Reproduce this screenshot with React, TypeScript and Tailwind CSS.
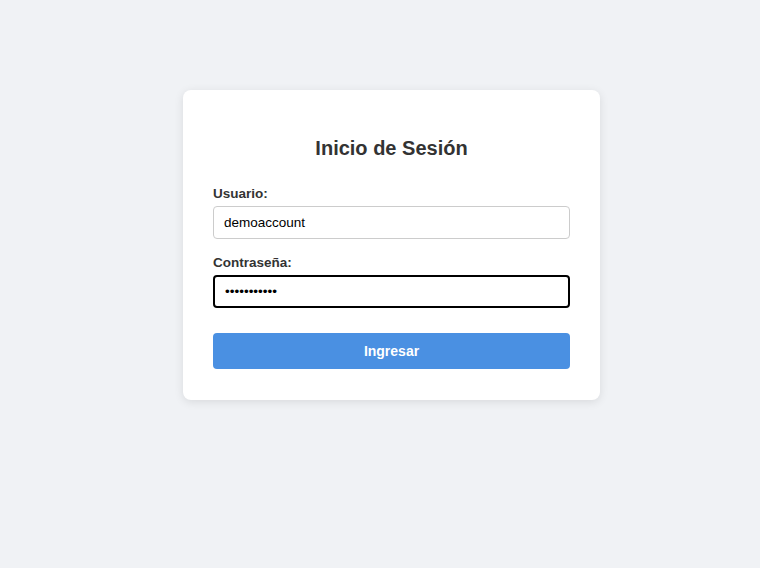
export default function App() {
  return (
    <div
      className="min-h-[568px] w-full bg-[#f0f2f5] pt-[90px] pl-[183px]"
      style={{ fontFamily: '"Liberation Sans", Arial, sans-serif' }}
    >
      <div className="w-[417px] rounded-lg bg-white px-[30px] pt-[47px] pb-[31px] shadow-[0_2px_10px_rgba(0,0,0,0.1)]">
        <h2 className="text-center text-[20px] font-bold leading-[23px] text-[#333]">
          Inicio de Sesión
        </h2>

        <form className="mt-[26px]" onSubmit={(e) => e.preventDefault()}>
          <label className="block text-[13.5px] font-bold leading-[15px] text-[#333]">
            Usuario:
          </label>
          <input
            type="text"
            defaultValue="demoaccount"
            className="mt-[5px] block h-[33px] w-full rounded border border-[#ccc] px-[10px] text-[13.5px] text-black outline-none"
          />

          <label className="mt-[16px] block text-[13.5px] font-bold leading-[15px] text-[#333]">
            Contraseña:
          </label>
          <input
            type="password"
            defaultValue="demoaccount"
            className="mt-[5px] block h-[33px] w-full rounded border-2 border-black px-[10px] text-[13.5px] text-black outline-none"
          />

          <button
            type="submit"
            className="mt-[25px] block h-[36px] w-full rounded bg-[#4a90e2] text-[14px] font-bold text-white"
          >
            Ingresar
          </button>
        </form>
      </div>
    </div>
  );
}
